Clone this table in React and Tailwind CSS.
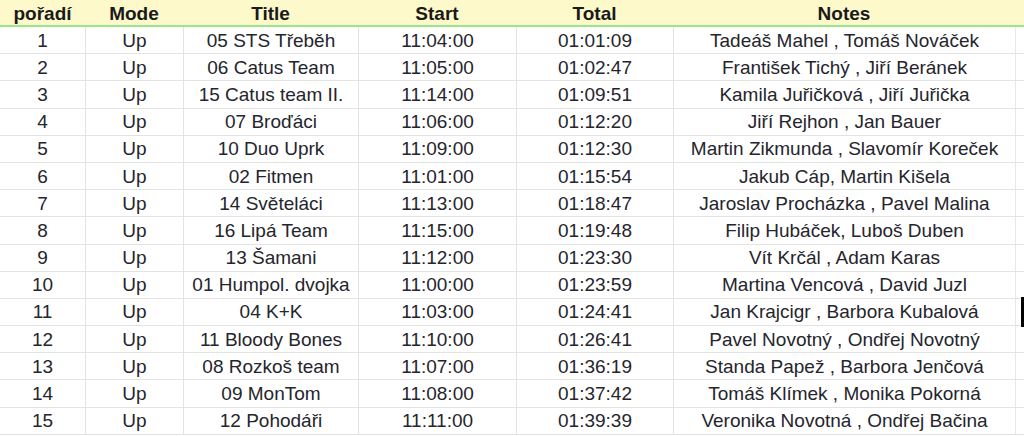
import React from "react";

const rows = [
  ["1", "Up", "05 STS Třeběh", "11:04:00", "01:01:09", "Tadeáš Mahel , Tomáš Nováček"],
  ["2", "Up", "06 Catus Team", "11:05:00", "01:02:47", "František Tichý , Jiří Beránek"],
  ["3", "Up", "15 Catus team II.", "11:14:00", "01:09:51", "Kamila Juřičková , Jiří Juřička"],
  ["4", "Up", "07 Broďáci", "11:06:00", "01:12:20", "Jiří Rejhon , Jan Bauer"],
  ["5", "Up", "10 Duo Uprk", "11:09:00", "01:12:30", "Martin Zikmunda , Slavomír Koreček"],
  ["6", "Up", "02 Fitmen", "11:01:00", "01:15:54", "Jakub Cáp, Martin Kišela"],
  ["7", "Up", "14 Světeláci", "11:13:00", "01:18:47", "Jaroslav Procházka , Pavel Malina"],
  ["8", "Up", "16 Lipá Team", "11:15:00", "01:19:48", "Filip Hubáček, Luboš Duben"],
  ["9", "Up", "13 Šamani", "11:12:00", "01:23:30", "Vít Krčál , Adam Karas"],
  ["10", "Up", "01 Humpol. dvojka", "11:00:00", "01:23:59", "Martina Vencová , David Juzl"],
  ["11", "Up", "04 K+K", "11:03:00", "01:24:41", "Jan Krajcigr , Barbora Kubalová"],
  ["12", "Up", "11 Bloody Bones", "11:10:00", "01:26:41", "Pavel Novotný , Ondřej Novotný"],
  ["13", "Up", "08 Rozkoš team", "11:07:00", "01:36:19", "Standa Papež , Barbora Jenčová"],
  ["14", "Up", "09 MonTom", "11:08:00", "01:37:42", "Tomáš Klímek , Monika Pokorná"],
  ["15", "Up", "12 Pohodáři", "11:11:00", "01:39:39", "Veronika Novotná , Ondřej Bačina"],
];

const headers = ["pořadí", "Mode", "Title", "Start", "Total", "Notes"];
const cols = "grid grid-cols-[85px_98px_175px_158px_157px_342px_1fr]";

export default function App() {
  return (
    <div
      className="w-[1024px] h-[436px] overflow-hidden bg-white text-[#25252d] relative"
      style={{ fontFamily: '"Liberation Sans", Arial, sans-serif' }}
    >
      <div className={`${cols} h-[27px] bg-[#fdf9cb] border-b-2 border-[#9be58a]`}>
        {headers.map((h, i) => (
          <div key={i} className="flex items-center justify-center text-[19px] font-bold text-[#1a1a1a] leading-none pt-px">
            {h}
          </div>
        ))}
        <div />
      </div>
      {rows.map((r, ri) => (
        <div key={ri} className={`${cols} h-[27.2px] border-b border-[#e3e3e3]`}>
          {r.map((c, ci) => (
            <div
              key={ci}
              className={`flex items-center justify-center text-[19px] leading-none ${ci > 0 ? "border-l border-[#e3e3e3]" : ""}`}
            >
              {c}
            </div>
          ))}
          <div className="border-l border-[#e8e8e8]" />
        </div>
      ))}
      <div className="absolute left-[1021px] top-[297px] w-[3px] h-[30px] bg-black" />
    </div>
  );
}
